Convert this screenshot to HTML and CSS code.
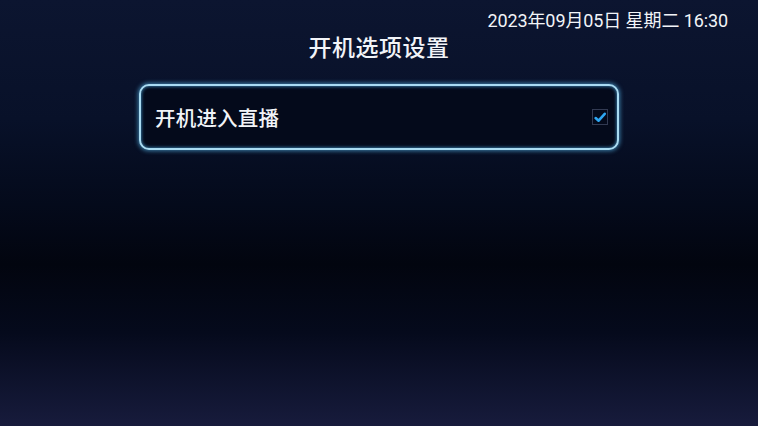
FILE: index.html
```html
<!DOCTYPE html>
<html lang="zh-CN">
<head>
<meta charset="utf-8">
<title>开机选项设置</title>
<link rel="stylesheet" href="styles.css">
</head>
<body>
<div class="screen">
  <div class="status">2023年09月05日 星期二 16:30</div>
  <h1 class="title">开机选项设置</h1>
  <div class="list">
    <div class="item">
      <span class="label">开机进入直播</span>
      <span class="check">
        <svg viewBox="0 0 16 16" width="15" height="15"><path d="M3 8.6 L6.4 11.6 L13.4 3.8" fill="none" stroke="#2ea6f2" stroke-width="3" stroke-linecap="round" stroke-linejoin="round"/></svg>
      </span>
    </div>
  </div>
</div>
</body>
</html>
```
FILE: styles.css
```css
html, body {
  margin: 0;
  padding: 0;
}
body {
  width: 758px;
  height: 426px;
  overflow: hidden;
  font-family: "Noto Sans CJK SC", "Noto Sans", Roboto, sans-serif;
  color: #f2f4f8;
  background: linear-gradient(to bottom, #0c1530 0%, #081129 28%, #040a1b 48%, #02050f 62%, #050a1c 78%, #171b3c 100%);
}
.screen {
  display: flex;
  flex-direction: column;
  height: 426px;
}
.status {
  align-self: flex-end;
  margin-top: 9px;
  margin-right: 30px;
  font-family: Roboto, "Noto Sans CJK SC", sans-serif;
  font-size: 18px;
  line-height: 24px;
  letter-spacing: -0.1px;
}
.title {
  margin: -2px 0 0;
  text-align: center;
  font-size: 23px;
  font-weight: 500;
  line-height: 30px;
  letter-spacing: 0.5px;
}
.list {
  margin-top: 23px;
  padding-left: 139px;
}
.item {
  width: 476px;
  height: 62px;
  box-sizing: content-box;
  display: flex;
  align-items: center;
  justify-content: space-between;
  border: 2px solid #a9dbf2;
  border-radius: 10px;
  background: #040a1b;
  box-shadow: 0 0 4px 1px rgba(80, 170, 220, 0.7), inset 0 0 3px 1px rgba(60, 140, 190, 0.7);
}
.label {
  margin-left: 14px;
  font-size: 20.5px;
  font-weight: 500;
  line-height: 28px;
  letter-spacing: 0.2px;
}
.check {
  margin-right: 9px;
  width: 16px;
  height: 16px;
  box-sizing: border-box;
  border: 1px solid #323a52;
  display: flex;
  align-items: center;
  justify-content: center;
}
.check svg {
  display: block;
}
```
